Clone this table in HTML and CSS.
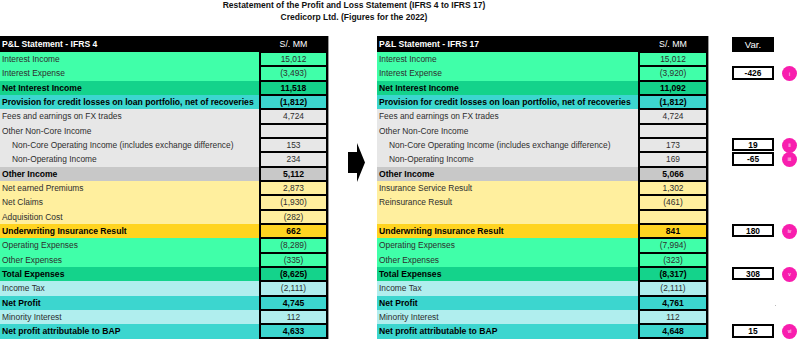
FILE: index.html
```html
<!DOCTYPE html>
<html>
<head>
<meta charset="utf-8">
<link rel="stylesheet" href="styles.css">
</head>
<body>
<div class="page">
  <div class="title">
    <div>Restatement of the Profit and Loss Statement (IFRS 4 to IFRS 17)</div>
    <div>Credicorp Ltd. (Figures for the 2022)</div>
  </div>
  <div class="main">
    <div class="tbl left">
      <div class="lbl hd b">P&amp;L Statement - IFRS 4</div><div class="val hd">S/. MM</div>
      <div class="lbl g">Interest Income</div><div class="val g">15,012</div>
      <div class="lbl g">Interest Expense</div><div class="val g">(3,493)</div>
      <div class="lbl dg b">Net Interest Income</div><div class="val dg b">11,518</div>
      <div class="lbl tl b">Provision for credit losses on loan portfolio, net of recoveries</div><div class="val tl b">(1,812)</div>
      <div class="lbl lg">Fees and earnings on FX trades</div><div class="val lg">4,724</div>
      <div class="lbl lg">Other Non-Core Income</div><div class="val lg"></div>
      <div class="lbl lg ind">Non-Core Operating Income (includes exchange difference)</div><div class="val lg">153</div>
      <div class="lbl lg ind">Non-Operating Income</div><div class="val lg">234</div>
      <div class="lbl gy b">Other Income</div><div class="val gy b">5,112</div>
      <div class="lbl ly">Net earned Premiums</div><div class="val ly">2,873</div>
      <div class="lbl ly">Net Claims</div><div class="val ly">(1,930)</div>
      <div class="lbl ly">Adquisition Cost</div><div class="val ly">(282)</div>
      <div class="lbl gold b">Underwriting Insurance Result</div><div class="val gold b">662</div>
      <div class="lbl g">Operating Expenses</div><div class="val g">(8,289)</div>
      <div class="lbl g">Other Expenses</div><div class="val g">(335)</div>
      <div class="lbl dg b">Total Expenses</div><div class="val dg b">(8,625)</div>
      <div class="lbl lc">Income Tax</div><div class="val lc">(2,111)</div>
      <div class="lbl tl b">Net Profit</div><div class="val tl b">4,745</div>
      <div class="lbl lc">Minority Interest</div><div class="val lc">112</div>
      <div class="lbl tl b">Net profit attributable to BAP</div><div class="val tl b last">4,633</div>
    </div>
    <div class="mid">
      <svg class="arrow" width="17" height="39" viewBox="0 0 17 39"><path d="M0 9H9V0L17 19.5L9 39V30H0Z" fill="#000"/></svg>
    </div>
    <div class="tbl right">
      <div class="lbl hd b">P&amp;L Statement - IFRS 17</div><div class="val hd">S/. MM</div>
      <div class="lbl g">Interest Income</div><div class="val g">15,012</div>
      <div class="lbl g">Interest Expense</div><div class="val g">(3,920)</div>
      <div class="lbl dg b">Net Interest Income</div><div class="val dg b">11,092</div>
      <div class="lbl tl b">Provision for credit losses on loan portfolio, net of recoveries</div><div class="val tl b">(1,812)</div>
      <div class="lbl lg">Fees and earnings on FX trades</div><div class="val lg">4,724</div>
      <div class="lbl lg">Other Non-Core Income</div><div class="val lg"></div>
      <div class="lbl lg ind">Non-Core Operating Income (includes exchange difference)</div><div class="val lg">173</div>
      <div class="lbl lg ind">Non-Operating Income</div><div class="val lg">169</div>
      <div class="lbl gy b">Other Income</div><div class="val gy b">5,066</div>
      <div class="lbl ly">Insurance Service Result</div><div class="val ly">1,302</div>
      <div class="lbl ly">Reinsurance Result</div><div class="val ly">(461)</div>
      <div class="lbl ly"></div><div class="val ly"></div>
      <div class="lbl gold b">Underwriting Insurance Result</div><div class="val gold b">841</div>
      <div class="lbl g">Operating Expenses</div><div class="val g">(7,994)</div>
      <div class="lbl g">Other Expenses</div><div class="val g">(323)</div>
      <div class="lbl dg b">Total Expenses</div><div class="val dg b">(8,317)</div>
      <div class="lbl lc">Income Tax</div><div class="val lc">(2,111)</div>
      <div class="lbl tl b">Net Profit</div><div class="val tl b">4,761</div>
      <div class="lbl lc">Minority Interest</div><div class="val lc">112</div>
      <div class="lbl tl b">Net profit attributable to BAP</div><div class="val tl b last">4,648</div>
    </div>
    <div class="var">
      <div class="varhd">Var.</div>
      <div></div>
      <div><span class="vbox">-426</span></div>
      <div></div><div></div><div></div><div></div>
      <div><span class="vbox">19</span></div>
      <div><span class="vbox">-65</span></div>
      <div></div><div></div><div></div><div></div>
      <div><span class="vbox">180</span></div>
      <div></div><div></div>
      <div><span class="vbox">308</span></div>
      <div></div>
      <div class="dotrow"><span class="dot"></span></div>
      <div></div>
      <div><span class="vbox">15</span></div>
    </div>
    <div class="marks">
      <div></div>
      <div></div>
      <div><span class="circ">i</span></div>
      <div></div><div></div><div></div><div></div>
      <div><span class="circ">ii</span></div>
      <div><span class="circ">iii</span></div>
      <div></div><div></div><div></div><div></div>
      <div><span class="circ">iv</span></div>
      <div></div><div></div>
      <div><span class="circ">v</span></div>
      <div></div><div></div><div></div>
      <div><span class="circ">vi</span></div>
    </div>
  </div>
</div>
</body>
</html>
```
FILE: styles.css
```css
html, body {
  margin: 0;
  padding: 0;
  background: #fff;
}
body {
  font-family: "Liberation Sans", Arial, sans-serif;
  color: #2e2e2e;
}
.page {
  width: 800px;
}
.title {
  width: 708px;
  height: 36px;
  text-align: center;
  font-weight: bold;
  font-size: 8.5px;
  line-height: 11.5px;
  color: #111;
}
.main {
  display: flex;
  align-items: flex-start;
}
.tbl {
  display: grid;
  grid-template-rows: 16px repeat(20, 14.33px);
}
.left {
  grid-template-columns: 259px 69px;
}
.right {
  grid-template-columns: 261px 70px;
}
.lbl {
  display: flex;
  align-items: center;
  padding-left: 2px;
  font-size: 8.4px;
  white-space: nowrap;
  overflow: hidden;
}
.lbl.ind {
  padding-left: 12px;
}
.val {
  box-sizing: border-box;
  display: flex;
  align-items: center;
  justify-content: center;
  font-size: 8.4px;
  border: 1px solid #000;
  border-left-width: 2px;
  border-right-width: 2px;
  box-shadow: 1px 0 0 #9a9a9a;
}
.val.last {
  border-bottom-width: 2px;
}
.b {
  font-weight: bold;
  font-size: 8.6px;
  color: #000;
}
.hd {
  background: #000;
  color: #fff;
}
.val.hd {
  font-size: 8.8px;
  border-color: #000;
}
.g { background: #40ffa9; }
.dg { background: #14d38b; }
.tl { background: #3cd6cf; }
.lg { background: #e7e7e7; }
.gy { background: #c8c8c8; }
.ly { background: #ffef9e; }
.gold { background: #ffd420; }
.lc { background: #b0eeee; }
.mid {
  width: 49px;
  padding-top: 107px;
}
.arrow {
  display: block;
  margin-left: 20px;
}
.var {
  margin-left: 24px;
  width: 42px;
  display: grid;
  grid-template-rows: 16px repeat(20, 14.33px);
}
.varhd {
  background: #000;
  color: #fff;
  font-size: 9.6px;
  display: flex;
  align-items: center;
  justify-content: center;
  margin-top: 1px;
}
.vbox {
  box-sizing: border-box;
  display: flex;
  align-items: center;
  justify-content: center;
  height: 13.5px;
  border: 2px solid #000;
  background: #fff;
  font-weight: bold;
  font-size: 8.4px;
  color: #000;
}
.dotrow {
  display: flex;
  align-items: center;
  justify-content: flex-end;
}
.dot {
  width: 1px;
  height: 1px;
  background: #bbb;
  margin-right: -2px;
  margin-top: 6px;
}
.marks {
  margin-left: 8px;
  width: 15px;
  display: grid;
  grid-template-rows: 16px repeat(20, 14.33px);
}
.marks > div {
  display: flex;
  align-items: center;
}
.circ {
  width: 15px;
  height: 15px;
  flex: none;
  border-radius: 50%;
  background: #f81eae;
  color: #fff;
  font-size: 5px;
  display: flex;
  align-items: center;
  justify-content: center;
}
```
